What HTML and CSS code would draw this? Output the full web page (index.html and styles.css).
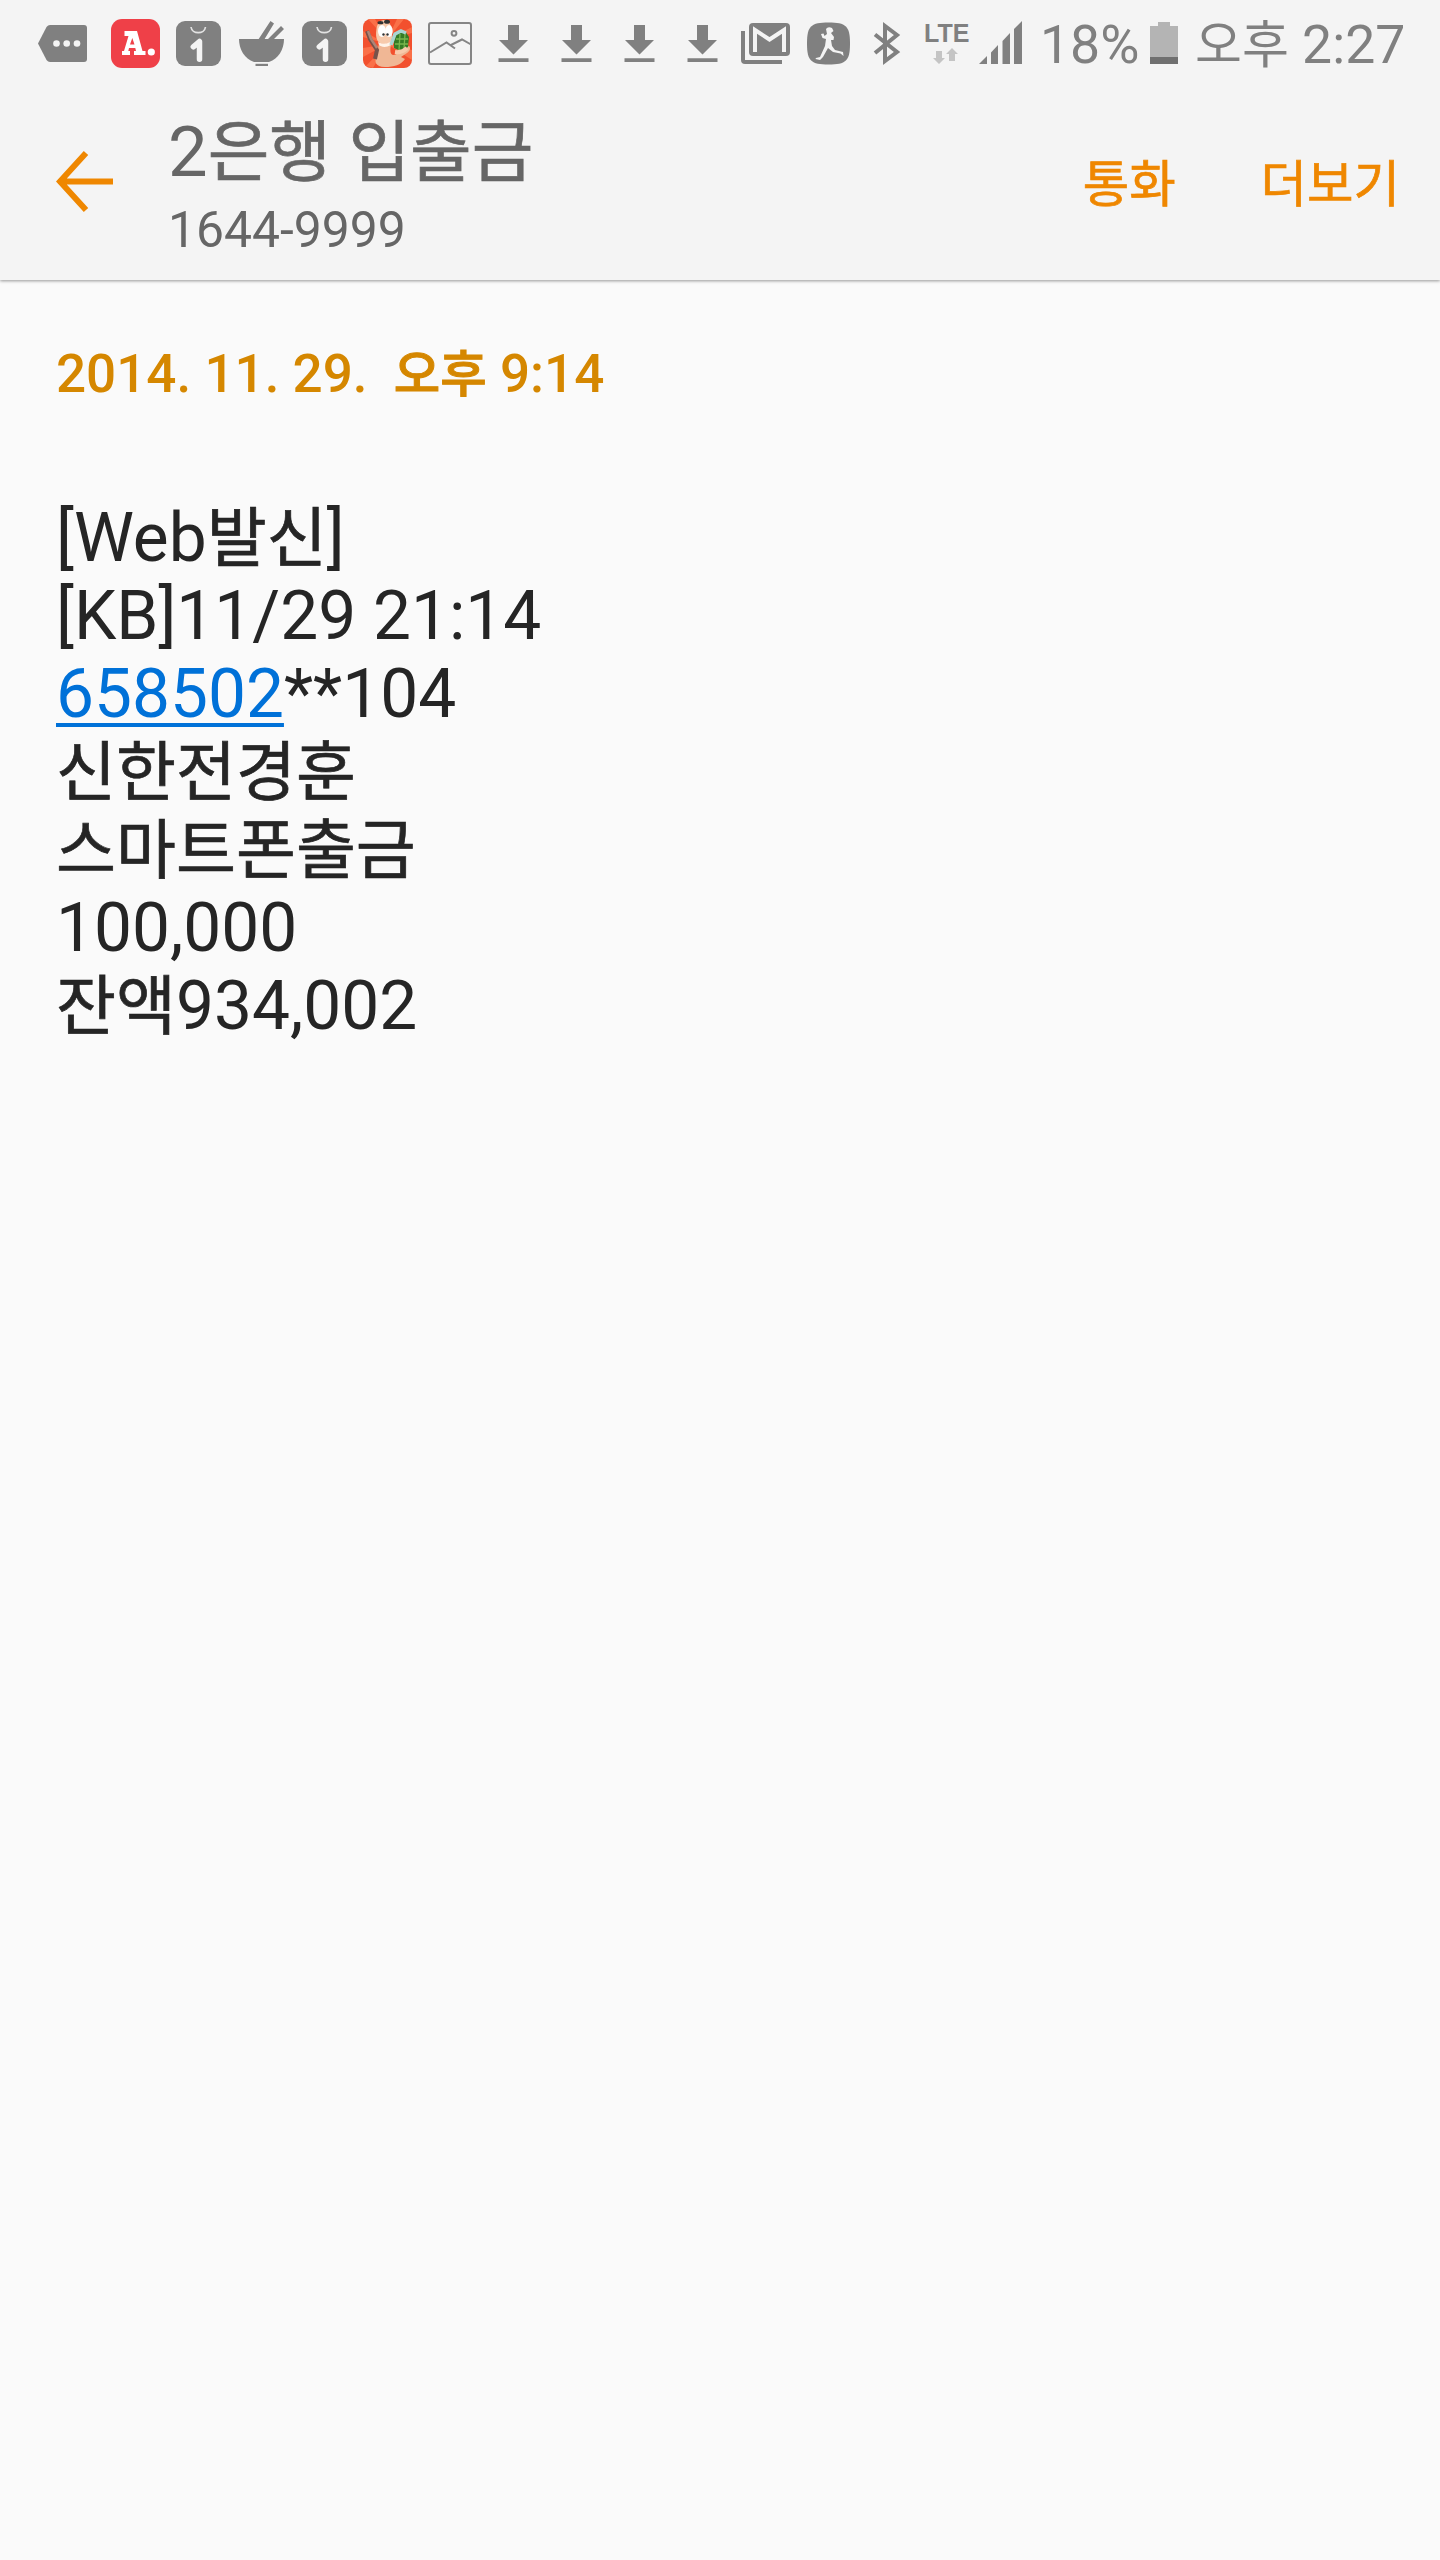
FILE: index.html
```html
<!DOCTYPE html>
<html lang="ko">
<head>
<meta charset="utf-8">
<title>2은행 입출금</title>
<link rel="stylesheet" href="styles.css">
</head>
<body>
<header class="top">
  <div class="status">
    <div class="icons">
      <svg class="slot more" viewBox="0 0 63 90"><path d="M19 25H53Q56 25 56 28V59Q56 62 53 62H19Q17 62 15.500 60L7 43.500L15.500 27Q17 25 19 25Z" fill="#808080"/><g fill="#f4f4f4"><circle cx="25.500" cy="43.500" r="3.300"/><circle cx="35.700" cy="43.500" r="3.300"/><circle cx="46" cy="43.500" r="3.300"/></g></svg>
      <svg class="slot" viewBox="0 0 63 90"><rect x="7" y="19" width="49" height="49" rx="11" fill="#ef4048"/><path fill="#fff" fill-rule="evenodd" d="M20.500 31H33L38.500 51H41.500V55H30V51H32L31.300 48H25L24.300 51H26V55H18V51H20L24.500 36H20.500ZM28.300 38L26 44.500H30.500Z"/><circle cx="47.300" cy="52" r="3.600" fill="#fff"/></svg>
      <svg class="slot" viewBox="0 0 63 90"><rect x="9" y="21" width="45" height="45" rx="9" fill="#808080"/><path d="M24 27C25 34.500 37.500 34.500 38.500 27" fill="none" stroke="#e2e2e2" stroke-width="1.700"/><path d="M26.300 46.800L32.500 41.500V59.200" fill="none" stroke="#f4f4f4" stroke-width="5.500" stroke-linecap="round" stroke-linejoin="round"/></svg>
      <svg class="slot" viewBox="0 0 63 90"><g fill="#808080"><path d="M9 39H54C54 49 48.500 59 39 62H24C14.500 59 9 49 9 39Z"/><path d="M28 40L40.500 21L44 23.500L34 40ZM37 40L51 26L54 29L43 40Z"/><rect x="25.500" y="63.800" width="12.500" height="2.200"/></g></svg>
      <svg class="slot" viewBox="0 0 63 90"><rect x="9" y="21" width="45" height="45" rx="9" fill="#808080"/><path d="M24 27C25 34.500 37.500 34.500 38.500 27" fill="none" stroke="#e2e2e2" stroke-width="1.700"/><path d="M26.300 46.800L32.500 41.500V59.200" fill="none" stroke="#f4f4f4" stroke-width="5.500" stroke-linecap="round" stroke-linejoin="round"/></svg>
      <svg class="slot" viewBox="0 0 63 90">
        <rect x="7" y="19" width="49" height="49" rx="8" fill="#f2502e"/>
        <path fill="#fa7048" d="M31 40L19 19H12ZM31 40L41 19H48ZM31 40L56 27V33ZM31 44L7 48V57ZM31 44L10 66L17 68ZM31 44L56 60V50ZM31 44L7 31V37Z"/>
        <path fill="#f0b795" d="M23 44H35C34 50 34 54 37 55C41 55 44 52 47 48L53 46C55 48 54 51 51 53L45 57L49 59C45 65 38 67 29 67C19 67 18 61 21 56Z"/>
        <path fill="#f7caac" d="M21 26C19 36 20 42 26 44C32 45 37 42 36 35L35 26C32 18 24 18 21 26Z"/>
        <path fill="#fff3e9" d="M22 42C27 45 32 44 35 41V45C30 48 25 47 23 45Z"/>
        <ellipse cx="26" cy="31" rx="4" ry="6" fill="#fff"/><ellipse cx="33" cy="31" rx="3.700" ry="6" fill="#fff"/>
        <g fill="#333"><circle cx="27.500" cy="34.500" r="1.200"/><circle cx="31.500" cy="34.500" r="1.200"/><ellipse cx="24.500" cy="22.700" rx="3" ry="1.600"/><ellipse cx="31" cy="21.700" rx="3" ry="2"/></g>
        <path d="M11 31L14 39L21 50L19 59" fill="none" stroke="#775249" stroke-width="4"/><path d="M12 31L15 39L21 48" fill="none" stroke="#ad8577" stroke-width="2.500"/>
        <path d="M38 36L43 31H49L53 37L52 47L45 51L38 48Z" fill="#347b25"/><path d="M40 39H52M39 44H52M44 34L43 50M49 34L48 49" stroke="#78b64e" stroke-width="1.300"/>
        <path d="M35 45L39 34L45 31L50 33" fill="none" stroke="#a9d5d2" stroke-width="3.500"/>
        <path d="M39 52Q46 53 51 48" fill="none" stroke="#f7caac" stroke-width="4"/>
      </svg>
      <svg class="slot" viewBox="0 0 63 90"><g fill="none" stroke="#858585" stroke-width="2"><rect x="10" y="23" width="42" height="41" rx="2"/><circle cx="35" cy="33.300" r="2.400"/><path d="M11 52.500L27.500 42.500L36 48.500M31 45.500L43 39.500L52 44.500"/></g></svg>
      <svg class="slot" viewBox="0 0 63 90"><path fill="#808080" d="M26 25H37V40H46L31.500 54.500L17 40H26ZM16.500 58.300H46.500V62H16.500Z"/></svg>
      <svg class="slot" viewBox="0 0 63 90"><path fill="#808080" d="M26 25H37V40H46L31.500 54.500L17 40H26ZM16.500 58.300H46.500V62H16.500Z"/></svg>
      <svg class="slot" viewBox="0 0 63 90"><path fill="#808080" d="M26 25H37V40H46L31.500 54.500L17 40H26ZM16.500 58.300H46.500V62H16.500Z"/></svg>
      <svg class="slot" viewBox="0 0 63 90"><path fill="#808080" d="M26 25H37V40H46L31.500 54.500L17 40H26ZM16.500 58.300H46.500V62H16.500Z"/></svg>
      <svg class="slot" viewBox="0 0 63 90"><rect x="15" y="23" width="41" height="33" rx="4" fill="#808080"/><path d="M7 31H11V60H48V64H11Q7 64 7 60Z" fill="#808080"/><path d="M21 52V30L35.500 39.500L50 30V52" fill="none" stroke="#f4f4f4" stroke-width="4"/></svg>
      <svg class="slot" viewBox="0 0 63 90"><path d="M31.500 22.500C49 22.500 53 26 53 43.500C53 61 49 64.500 31.500 64.500C14 64.500 10 61 10 43.500C10 26 14 22.500 31.500 22.500Z" fill="#808080"/><path fill="#f4f4f4" d="M29 29Q31 26 35 28L36.500 31L34 33L37 37L36.500 40L34 40L35 46L38 50L46 52L46.500 56L43.500 53.500L36 52L31 48L26 57L23 60L18.500 59L19 58L23 57L28 46L29 39L25.500 38L24 34L26.500 33.500L27.500 36L30 34Z"/></svg>
    </div>
    <svg class="bluetooth" viewBox="0 0 32 90"><path d="M4 34.500L26 52L14 61V26L26 35L4 53" fill="none" stroke="#808080" stroke-width="4"/></svg>
    <div class="network"><span class="lte">LTE</span>
      <svg class="arrows" viewBox="0 0 26 17"><path fill="#c4c4c4" d="M4 4H10V11H13L7 17L1 11H4ZM17 14H23V7H26L20 1L14 7H17Z"/></svg>
    </div>
    <svg class="signal" viewBox="0 0 43 43"><path fill="#808080" d="M0 43L8 35V43ZM12 31.500L19 24V43H12ZM23.500 20L31 12V43H23.500ZM35 8L43 0V43H35Z"/></svg>
    <span class="percent">18%</span>
    <svg class="battery" viewBox="0 0 28 42"><path fill="#b4b4b4" d="M8 0H20V4H28V35H0V4H8Z"/><path fill="#707070" d="M0 35H28V42H0Z"/></svg>
    <span class="clock"><span class="ko">오후</span> 2:27</span>
  </div>
  <div class="appbar">
    <svg class="back" viewBox="0 0 60 70"><path d="M30 5L4 33.500L30 62M4 33.500H57" fill="none" stroke="#ef8700" stroke-width="6"/></svg>
    <div class="contact">
      <h1 class="name">2<span class="ko">은행</span> <span class="ko">입출금</span></h1>
      <div class="number">1644-9999</div>
    </div>
    <nav class="actions"><span class="ko">통화</span><span class="ko">더보기</span></nav>
  </div>
</header>
<main class="message">
  <div class="date">2014. 11. 29.&nbsp; <span class="ko">오후</span> 9:14</div>
  <div class="text">
    <div>[Web<span class="ko">발신</span>]</div>
    <div>[KB]11/29 21:14</div>
    <div><a class="link">658502</a>**104</div>
    <div><span class="ko">신한전경훈</span></div>
    <div><span class="ko">스마트폰출금</span></div>
    <div>100,000</div>
    <div><span class="ko">잔액</span>934,002</div>
  </div>
</main>
</body>
</html>
```
FILE: styles.css
```css
* { box-sizing: border-box; }
body {
  margin: 0;
  min-height: 2560px;
  background: #fafafa;
  color: #252525;
  font-family: Roboto, "Noto Sans CJK KR", sans-serif;
}
svg { display: block; flex: none; }
.ko { -webkit-text-stroke: .7px currentColor; }
.top {
  height: 280px;
  background: #f4f4f4;
  box-shadow: 0 1px 3px rgba(0, 0, 0, .4);
}
.status {
  display: flex;
  height: 90px;
  padding-left: 31px;
  color: #808080;
  font-size: 53.500px;
  line-height: 90px;
  white-space: nowrap;
}
.icons { display: flex; }
.slot { width: 63px; height: 90px; }
.more { margin-right: 10px; }
.bluetooth { width: 32px; height: 90px; margin-left: 11px; }
.network { width: 45px; margin: 20px 0 0 21px; line-height: 26px; }
.lte { display: block; font: bold 25px/26px "Liberation Sans", sans-serif; }
.arrows { width: 26px; height: 17px; margin: 1px 0 0 8px; }
.signal { width: 43px; height: 43px; margin: 21px 0 0 10px; }
.percent { width: 107px; margin-left: 18px; }
.battery { width: 28px; height: 42px; margin: 22px 0 0 3px; }
.clock { margin-left: 17px; }
.clock .ko { font-size: 51px; -webkit-text-stroke: 0; }
.appbar { display: flex; height: 190px; padding: 0 40px 0 56px; }
.back { width: 60px; height: 70px; margin-top: 58px; }
.contact { flex: 1; margin-left: 52px; color: #666; }
.name {
  height: 84px;
  margin: 20px 0 0;
  font-size: 70.500px;
  font-weight: 400;
  line-height: 84px;
}
.name .ko { font-size: 67px; }
.number { margin-top: 1px; font-size: 49.800px; line-height: 70px; }
.actions {
  display: flex;
  gap: 85px;
  padding-top: 55px;
  color: #ef8700;
  font-size: 50.500px;
  line-height: 80px;
}
.message { padding: 64px 56px; }
.date {
  height: 60px;
  color: #d58700;
  font-size: 53px;
  font-weight: 500;
  line-height: 60px;
  white-space: nowrap;
}
.date .ko { font-size: 50.500px; -webkit-text-stroke: 1px currentColor; }
.text { margin-top: 95px; font-size: 67.600px; line-height: 78px; }
.text > div { height: 78px; }
.text .ko { font-size: 65.200px; }
.link {
  color: #0071d8;
  text-decoration: underline;
  text-decoration-thickness: 4px;
  text-underline-offset: 6px;
}
```
